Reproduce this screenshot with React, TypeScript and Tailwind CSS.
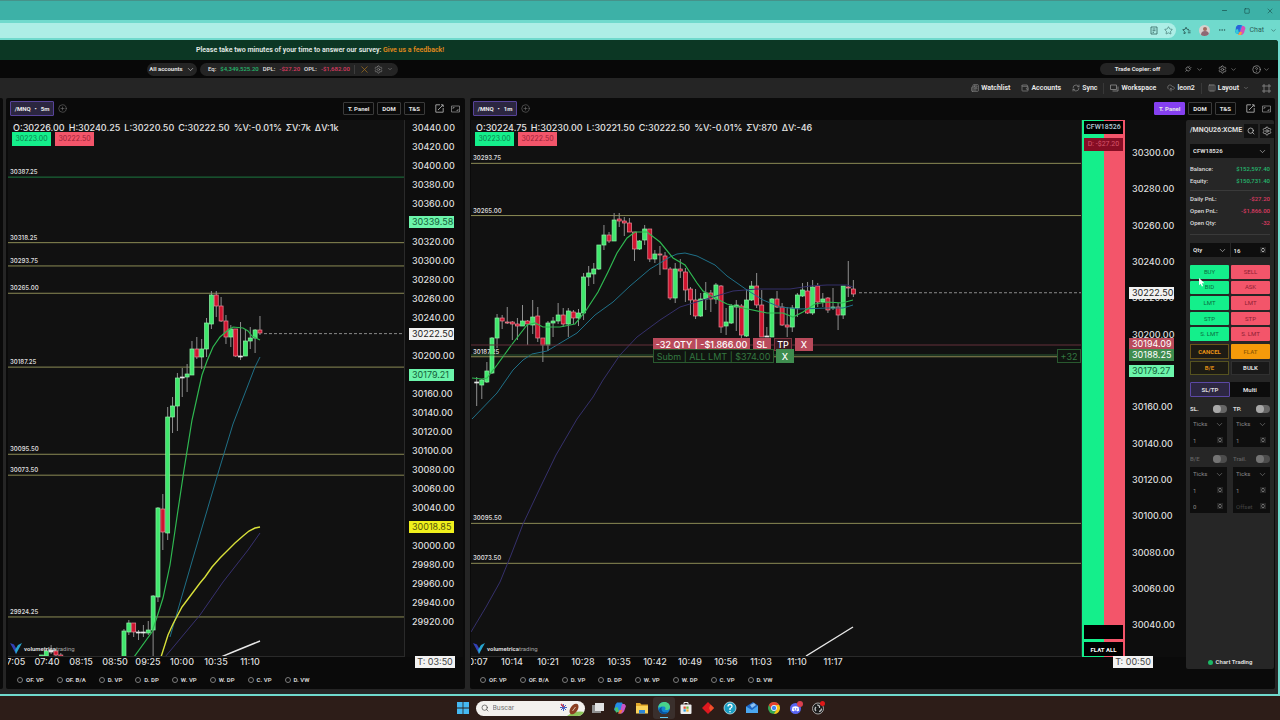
import type { ReactNode } from 'react';
import {
  ChevronDown,
  ChevronsUpDown,
  CirclePlus,
  CircleQuestionMark,
  CloudUpload,
  Columns3,
  Ellipsis,
  Minus,
  Newspaper,
  Plug,
  RefreshCw,
  Search,
  Settings,
  Square,
  Star,
  Wallet,
  X,
} from 'lucide-react';

// slot, body top, body bottom, high, low, direction (u = up, d = down, n = doji)
type Candle = [number, number, number, number, number, 'u' | 'd' | 'n'];

const candles5m: Candle[] = [
  [0, 535, 537, 535, 537, 'u'], [1, 531, 536, 528, 537, 'u'], [2, 530, 532, 525, 534, 'n'],
  [3, 531, 535, 529, 537, 'd'], [4, 535, 537, 533, 537, 'd'], [17, 511, 537, 509, 537, 'u'],
  [18, 503, 512, 500, 515, 'u'], [19, 503, 512, 503, 517, 'd'], [20, 512, 513, 510, 520, 'n'],
  [21, 512, 513, 505, 517, 'n'], [22, 510, 513, 501, 515, 'u'], [23, 476, 510, 475, 537, 'u'],
  [24, 388, 477, 387, 482, 'u'], [25, 389, 412, 374, 430, 'd'], [26, 297, 413, 287, 420, 'u'],
  [27, 286, 297, 277, 313, 'u'], [28, 258, 286, 253, 311, 'u'], [29, 257, 258, 248, 277, 'n'],
  [30, 254, 257, 244, 272, 'u'], [31, 229, 255, 221, 255, 'u'], [32, 229, 237, 217, 239, 'd'],
  [33, 229, 237, 219, 249, 'u'], [34, 203, 229, 198, 237, 'u'], [35, 175, 204, 171, 209, 'u'],
  [36, 175, 186, 171, 197, 'd'], [37, 186, 201, 177, 202, 'd'], [38, 201, 217, 195, 224, 'd'],
  [39, 209, 217, 205, 227, 'u'], [40, 209, 236, 209, 237, 'd'], [41, 236, 237, 202, 240, 'n'],
  [42, 221, 236, 209, 236, 'u'], [43, 218, 221, 207, 229, 'u'], [44, 210, 218, 209, 233, 'u'],
  [45, 210, 213, 196, 215, 'd'],
];

const candles1m: Candle[] = [
  [0, 262, 263, 257, 286, 'n'], [1, 260, 265, 259, 279, 'u'], [2, 251, 262, 242, 263, 'u'],
  [3, 218, 253, 217, 254, 'u'], [4, 198, 218, 194, 228, 'u'], [5, 198, 201, 195, 209, 'd'],
  [6, 202, 203, 187, 204, 'd'], [7, 202, 204, 201, 220, 'd'], [8, 204, 206, 198, 220, 'd'],
  [9, 201, 206, 185, 206, 'u'], [10, 201, 204, 200, 225, 'd'], [11, 197, 205, 180, 214, 'u'],
  [12, 196, 218, 187, 222, 'd'], [13, 218, 225, 218, 242, 'd'], [14, 203, 225, 201, 231, 'u'],
  [15, 201, 203, 197, 217, 'u'], [16, 195, 201, 183, 204, 'u'], [17, 195, 204, 188, 207, 'd'],
  [18, 191, 204, 188, 217, 'u'], [19, 192, 198, 190, 204, 'd'], [20, 193, 198, 189, 206, 'u'],
  [21, 157, 193, 153, 200, 'u'], [22, 153, 157, 146, 166, 'u'], [23, 149, 154, 143, 164, 'u'],
  [24, 125, 149, 125, 150, 'u'], [25, 115, 125, 105, 130, 'u'], [26, 115, 121, 112, 123, 'd'],
  [27, 100, 121, 93, 121, 'u'], [28, 99, 101, 93, 107, 'd'], [29, 101, 103, 97, 116, 'd'],
  [30, 103, 112, 98, 112, 'd'], [31, 112, 129, 112, 141, 'd'], [32, 121, 129, 120, 130, 'u'],
  [33, 109, 120, 105, 125, 'u'], [34, 109, 139, 109, 142, 'd'], [35, 134, 139, 130, 143, 'u'],
  [36, 134, 135, 126, 155, 'd'], [37, 136, 149, 132, 149, 'd'], [38, 149, 178, 147, 180, 'd'],
  [39, 149, 178, 143, 183, 'u'], [40, 149, 151, 139, 158, 'd'], [41, 152, 170, 148, 182, 'd'],
  [42, 169, 180, 167, 195, 'd'], [43, 180, 196, 169, 199, 'd'], [44, 179, 196, 173, 197, 'u'],
  [45, 173, 179, 162, 190, 'u'], [46, 173, 179, 170, 192, 'd'], [47, 165, 179, 163, 184, 'u'],
  [48, 166, 207, 165, 213, 'd'], [49, 202, 206, 188, 215, 'u'], [50, 186, 203, 184, 204, 'u'],
  [51, 185, 187, 180, 211, 'u'], [52, 186, 215, 184, 218, 'd'], [53, 180, 216, 169, 217, 'u'],
  [54, 166, 180, 161, 181, 'u'], [55, 166, 185, 153, 188, 'd'], [56, 185, 217, 170, 217, 'd'],
  [57, 216, 217, 207, 217, 'n'], [58, 179, 217, 178, 217, 'u'], [59, 179, 187, 171, 188, 'd'],
  [60, 187, 205, 183, 206, 'd'], [61, 205, 207, 187, 217, 'd'], [62, 188, 207, 185, 212, 'u'],
  [63, 175, 188, 173, 197, 'u'], [64, 170, 176, 163, 177, 'u'], [65, 171, 193, 162, 194, 'd'],
  [66, 167, 193, 160, 195, 'u'], [67, 166, 182, 163, 187, 'd'], [68, 179, 182, 173, 187, 'u'],
  [69, 178, 190, 177, 193, 'd'], [70, 187, 188, 168, 190, 'u'], [71, 187, 195, 183, 210, 'd'],
  [72, 166, 195, 166, 199, 'u'], [73, 167, 168, 141, 177, 'd'], [74, 169, 174, 160, 177, 'd'],
];

const averages5m = [
  { color: '#1f6f86', width: 1, points: '162,517 169,493 185,438 211,350 225,304 237,273 247,247 252,237' },
  { color: '#37306f', width: 1, points: '157,537 192,495 215,462 240,430 252,413' },
  { color: '#d8e03a', width: 1.4, points: '153,537 160,515 165,504 174,487 183,475 192,463 197,457 204,447 212,438 219,431 227,423 235,416 241,411 247,408 252,407' },
  { color: '#2fb851', width: 1.2, points: '126,537 144,512 149,497 155,478 162,445 170,390 176,350 184,300 194,255 199,241 205,227 212,217 219,211 225,207 235,208 240,211 244,216 248,218 252,220' },
  { color: '#e8e8e8', width: 1.4, points: '213,537 225,532 252,521' },
];

const averages1m = [
  { color: '#35306b', width: 1, points: '0,512 15,487 29,462 40,435 52,404 69,368 85,335 106,299 122,277 132,260 149,235 166,217 189,200 209,187 232,180 262,171 286,169 319,169 339,166 356,165 376,165 382,167' },
  { color: '#1f7088', width: 1, points: '1,299 26,273 42,250 52,240 61,234 76,231 91,222 106,213 124,195 142,182 159,166 179,149 199,137 206,134 214,133 226,136 244,145 256,156 276,170 292,180 309,187 329,189 356,188 372,188 382,185' },
  { color: '#2fb851', width: 1.2, points: '1,258 11,259 16,258 26,245 39,227 56,205 64,203 72,207 89,207 104,204 114,192 127,172 137,152 146,133 156,118 164,112 176,112 189,122 202,138 214,145 226,163 232,171 242,177 256,184 272,188 296,193 312,193 322,197 332,192 344,184 356,182 371,183 382,180' },
  { color: '#e8e8e8', width: 1.4, points: '335,536 382,507' },
];

type ChartData = {
  candles: Candle[];
  averages: { color: string; width: number; points: string }[];
  firstX: number;
  step: number;
  lastX: number;
  y: (price: number) => number;
  levels: { price: number; color?: string }[];
  times: [number, string][];
};

const y5m = (price: number) => 7 + (30440 - price) * 0.95;
const y1m = (price: number) => 32 + (30300 - price) * 1.816;

const chart5m: ChartData = {
  candles: candles5m,
  averages: averages5m,
  firstX: 33.4,
  step: 4.857,
  lastX: 256,
  y: y5m,
  levels: [
    { price: 30387.25, color: '#1d7a40' },
    { price: 30318.25 },
    { price: 30293.75 },
    { price: 30265 },
    { price: 30187.25 },
    { price: 30095.5 },
    { price: 30073.5 },
    { price: 29924.25 },
  ],
  times: [[5, '07:05'], [39, '07:40'], [73, '08:15'], [107, '08:50'], [140, '09:25'], [174, '10:00'], [208, '10:35'], [242, '11:10']],
};

const chart1m: ChartData = {
  candles: candles1m,
  averages: averages1m,
  firstX: 5.7,
  step: 5.09,
  lastX: 388,
  y: y1m,
  levels: [
    { price: 30318.25 },
    { price: 30293.75 },
    { price: 30265 },
    { price: 30187.25 },
    { price: 30095.5 },
    { price: 30073.5 },
  ],
  times: [
    [5, '10:07'], [41, '10:14'], [77, '10:21'], [112, '10:28'], [148, '10:35'], [184, '10:42'],
    [219, '10:49'], [255, '10:56'], [290, '11:03'], [326, '11:10'], [362, '11:17'],
  ],
};

function Plot({ data, children }: { data: ChartData; children?: ReactNode }) {
  return (
    <div className="relative min-h-[537px] min-w-0 flex-1 overflow-hidden border-b border-r border-[#2a2a2a] bg-[#111111] font-['Inter',sans-serif]">
      <svg className="absolute inset-0 h-full w-full">
        {data.levels.map(({ price, color }) => (
          <g key={price}>
            <line x1="0" x2="100%" y1={data.y(price)} y2={data.y(price)} stroke={color ?? '#8c8b55'} />
            <text x="2" y={data.y(price) - 3} fill="#d6d6d6" fontSize="6" fontWeight="600">
              {data.y(price) > 8 && price.toFixed(2)}
            </text>
          </g>
        ))}
        {data.candles.map(([slot, top, bottom, high, low, dir]) => {
          const x = data.firstX + slot * data.step;
          return (
            <g key={slot}>
              <line x1={x} x2={x} y1={high} y2={low} stroke="#8f8f8f" />
              <rect
                x={x - 2}
                y={top}
                width="4"
                height={bottom - top}
                fill={dir === 'u' ? '#3fe86c' : dir === 'd' ? '#d0142f' : '#e5e5e5'}
                stroke={dir === 'u' ? '#8df2a6' : dir === 'd' ? '#e98b98' : '#e5e5e5'}
                strokeWidth="0.7"
              />
            </g>
          );
        })}
        {data.averages.map((line) => (
          <polyline key={line.points} points={line.points} fill="none" stroke={line.color} strokeWidth={line.width} />
        ))}
        <line
          x1={data.lastX}
          x2="100%"
          y1={data.y(30222.5)}
          y2={data.y(30222.5)}
          stroke="#8a8a8a"
          strokeDasharray="3 2"
        />
      </svg>
      {children}
      <div className="absolute bottom-[2px] left-[2px] flex items-center gap-[2px] font-['Roboto',sans-serif] text-[6px] leading-none text-[#a5a5a5]">
        <svg viewBox="0 0 12 11" className="h-[11px] w-[12px]">
          <path d="M0 0 L4 1.5 L6.5 6 L6 11 Z" fill="#3340b5" />
          <path d="M12 0 L8 2 L5 7 L6 11 Z" fill="#27a5cf" />
        </svg>
        <span>
          <b className="font-bold text-[#d8d8d8]">volumetrica</b>trading
        </span>
      </div>
    </div>
  );
}

function TimeAxis({ times }: { times: [number, string][] }) {
  return (
    <svg className="mt-[-3px] block h-[16px] w-full shrink-0 font-['Inter',sans-serif]">
      {times.map(([x, label]) => (
        <text key={label} x={x} y="11" fill="#dedede" fontSize="9" fontWeight="500" textAnchor="middle">
          {label}
        </text>
      ))}
    </svg>
  );
}

type Tag = { price: number; bg: string; fg: string };
type PriceAxisProps = { y: (price: number) => number; from: number; to: number; tags: Tag[]; className: string };

function PriceAxis({ y, from, to, tags, className }: PriceAxisProps) {
  const prices: number[] = [];
  for (let p = from; p >= to; p -= 20) {
    // a tag that sits right on a grid price replaces it
    if (!tags.some((tag) => Math.abs(y(tag.price) - y(p)) < 4)) prices.push(p);
  }
  return (
    <svg className={`shrink-0 bg-[#0d0d0d] font-['Inter',sans-serif] ${className}`}>
      {prices.map((p) => (
        <text key={p} x="7" y={y(p) + 4} fill="#dedede" fontSize="9" fontWeight="500">
          {p.toFixed(2)}
        </text>
      ))}
      {tags.map((tag) => (
        <g key={tag.price}>
          <rect x="4" y={Math.round(y(tag.price) - 6)} width="45" height="12" fill={tag.bg} />
          <text x="7" y={y(tag.price) + 3} fill={tag.fg} fontSize="9">
            {tag.price.toFixed(2)}
          </text>
        </g>
      ))}
    </svg>
  );
}

function Legend({ values }: { values: [string, string][] }) {
  return (
    <div className="absolute left-[4px] top-[3px]">
      <div className="flex gap-[4px] pl-px text-[9px] font-medium leading-[9px] text-[#e4e4e4]">
        {values.map(([name, value]) => (
          <span key={name}>
            {name}:{value}
          </span>
        ))}
      </div>
      <div className="flex gap-[4px] text-[7px] leading-[14px]">
        <span className="w-[39px] bg-[#14ef8b] text-center text-[#0d7d4b]">30223.00</span>
        <span className="w-[39px] bg-[#f3556a] text-center text-[#9a2438]">30222.50</span>
      </div>
    </div>
  );
}

function PanelHeader({ frame, active }: { frame: string; active?: boolean }) {
  const box = 'h-[13px] rounded-[1px] border px-[4px] text-[6px] font-bold leading-none';
  return (
    <div className="flex h-[22px] shrink-0 items-center justify-between pb-px pl-[2px] pr-[3px]">
      <div className="flex items-center gap-[4px]">
        <button className="flex h-[15px] w-[44px] items-center justify-center gap-[4px] rounded-[1px] border border-[#574399] bg-[#2b2640] text-[6px] font-bold text-[#ececec]">
          <span>/MNQ</span>
          <span>•</span>
          <span>{frame}</span>
        </button>
        <button aria-label="Add chart">
          <CirclePlus className="size-[9px] text-[#777]" strokeWidth={1.5} />
        </button>
      </div>
      <div className="flex items-center gap-[3px] text-[#e4e4e4]">
        <button className={active ? `${box} border-[#8540f0] bg-[#8540f0]` : `${box} border-[#3a3a3a]`}>T. Panel</button>
        <button className={`${box} border-[#3a3a3a]`}>DOM</button>
        <button className={`${box} border-[#3a3a3a]`}>T&amp;S</button>
        <button aria-label="Detach" className="ml-[7px]">
          <svg viewBox="0 0 9 9" className="size-[9px]" fill="none" stroke="#aaa" strokeWidth=".9">
            <path d="M5 .8H.8v7.400h7.400V4 M3 6l5-5 M6 .8h2.200V3" />
          </svg>
        </button>
        <button aria-label="Maximize" className="ml-[4px]">
          <svg viewBox="0 0 9 8" className="h-[8px] w-[9px]" fill="none" stroke="#8a8a8a">
            <path d="M.5 1h8v6h-8z M2 4V2.5h1.500 M7 4v1.500H5.500" strokeWidth=".8" />
          </svg>
        </button>
      </div>
    </div>
  );
}

function StudyBar({ group }: { group: string }) {
  const studies = ['OF. VP', 'OF. B/A', 'D. VP', 'D. DP', 'W. VP', 'W. DP', 'C. VP', 'D. VW'];
  return (
    <div className="flex h-[19px] shrink-0 items-center gap-[13px] pl-[9px]">
      {studies.map((name) => (
        <label key={name} className="flex items-center gap-[3px] text-[6px] font-bold leading-none text-[#cfcfcf]">
          <input type="radio" name={group} className="size-[6px] appearance-none rounded-full border border-[#7c7c7c]" />
          {name}
        </label>
      ))}
    </div>
  );
}

function Select({ label, value, className = '' }: { label: string; value: string; className?: string }) {
  return (
    <span className={`relative flex h-[14px] min-w-0 items-center bg-[#0e0e0e] ${className}`}>
      <select aria-label={label} className="h-full w-full appearance-none rounded-none bg-transparent px-[3px] text-[6px] leading-none">
        <option>{value}</option>
      </select>
      <ChevronDown className="pointer-events-none absolute right-[3px] size-[9px]" strokeWidth={1.5} />
    </span>
  );
}

function NumberBox({ label, value, placeholder }: { label: string; value?: string; placeholder?: string }) {
  return (
    <span className="flex h-[14px] min-w-0 items-center bg-[#0e0e0e] pr-[4px]">
      <input
        aria-label={label}
        defaultValue={value}
        placeholder={placeholder}
        className="h-full w-full min-w-0 bg-transparent px-[3px] text-[6px] leading-none placeholder:text-[#444]"
      />
      <span className="bg-[#262626]">
        <ChevronsUpDown className="size-[6px]" strokeWidth={3} />
      </span>
    </span>
  );
}

function Toggle({ label, dim }: { label: string; dim?: boolean }) {
  return (
    <label
      className={
        dim
          ? 'flex items-center justify-between text-[6px] font-medium text-[#8d8d8d] opacity-60'
          : 'flex items-center justify-between text-[6px] font-bold text-[#dcdcdc]'
      }
    >
      {label}
      <input
        type="checkbox"
        className="h-[8px] w-[14px] appearance-none rounded-full bg-[#666] before:block before:size-[8px] before:rounded-full before:bg-[#a8a8a8]"
      />
    </label>
  );
}

function Row({ name, value, tone }: { name: string; value: string; tone: string }) {
  return (
    <div className="flex h-[12px] items-center justify-between">
      <dt>{name}</dt>
      <dd className={tone}>{value}</dd>
    </div>
  );
}

function OrderPanel() {
  const orders = ['BUY', 'SELL', 'BID', 'ASK', 'LMT', 'LMT', 'STP', 'STP', 'S. LMT', 'S. LMT'];
  return (
    <aside className="mb-[-12px] flex w-[88px] shrink-0 flex-col rounded-[2px] bg-[#262626] px-[4px] text-[6px] leading-none text-[#dcdcdc]">
      <div className="mr-[-2px] flex h-[21px] items-center gap-[2px]">
        <h2 className="flex-1 text-[7px] font-bold">/MNQU26:XCME</h2>
        <button aria-label="Search symbol" className="bg-[#111] p-[3px]">
          <Search className="size-[8px]" />
        </button>
        <button aria-label="Panel settings" className="bg-[#111] p-[2px]">
          <Settings className="size-[10px]" strokeWidth={1.5} />
        </button>
      </div>
      <Select label="Account" value="CFW18526" className="mt-[3px] font-bold" />
      <dl className="mt-[5px] border-b border-[#3a3a3a] pb-[3px] font-medium">
        <Row name="Balance:" value="$152,597.40" tone="text-[#25b86e]" />
        <Row name="Equity:" value="$150,731.40" tone="text-[#25b86e]" />
      </dl>
      <dl className="mt-[2px] border-b border-[#3a3a3a] pb-[5px] font-medium">
        <Row name="Daily PnL:" value="-$27.20" tone="text-[#dd3b62]" />
        <Row name="Open PnL:" value="-$1,866.00" tone="text-[#dd3b62]" />
        <Row name="Open Qty:" value="-32" tone="text-[#dd3b62]" />
      </dl>
      <div className="mt-[8px] grid grid-cols-2 gap-px font-bold">
        <Select label="Quantity type" value="Qty" />
        <NumberBox label="Quantity" value="16" />
      </div>
      <div className="relative mt-[8px] grid h-[76px] grid-cols-2 grid-rows-5 gap-x-[2px] gap-y-[2px]">
        {orders.map((name, i) => (
          <button
            key={i}
            className={i % 2 === 0 ? 'rounded-[1px] bg-[#14ef8b] text-[#0d6b40]' : 'rounded-[1px] bg-[#f3556a] text-[#8d2033]'}
          >
            {name}
          </button>
        ))}
        {/* mouse pointer */}
        <svg viewBox="0 0 8 11" className="absolute left-[8px] top-[13px] h-[9px] w-[7px]">
          <path d="M1 0v9l2-2 1.500 3.500 1.500-.7L4.500 6.500H7.500z" fill="#fff" />
        </svg>
      </div>
      <div className="mt-[3px] grid grid-cols-2 gap-x-[2px] gap-y-[2px] font-bold">
        <button className="h-[15px] border border-[#6b5418] bg-[#1e1b14] text-[#e69414]">CANCEL</button>
        <button className="h-[15px] rounded-[1px] bg-[#f59a0a] font-medium text-[#8f5a05]">FLAT</button>
        <button className="h-[14px] border border-[#55521f] bg-[#1c1b14] text-[#d98a14]">B/E</button>
        <button className="h-[14px] border border-[#303030] bg-[#191919]">BULK</button>
      </div>
      <div className="mt-[7px] grid grid-cols-2 font-bold">
        <button className="h-[15px] rounded-[1px] border border-[#5c48a5] bg-[#2d2742]">SL/TP</button>
        <button className="h-[15px] bg-[#0c0c0c]">Multi</button>
      </div>
      <div className="mt-[8px] grid grid-cols-2 gap-x-[6px]">
        <Toggle label="SL." />
        <Toggle label="TP." />
      </div>
      <div className="mt-[4px] grid grid-cols-2 gap-x-[6px] text-[#8a8a8a]">
        {['Stop', 'Target'].map((name) => (
          <div key={name} className="flex h-[30px] flex-col justify-between bg-[#0e0e0e]">
            <Select label={`${name} unit`} value="Ticks" />
            <NumberBox label={`${name} distance`} value="1" />
          </div>
        ))}
      </div>
      <div className="mt-[8px] grid grid-cols-2 gap-x-[6px]">
        <Toggle label="B/E" dim />
        <Toggle label="Trail." dim />
      </div>
      <div className="mt-[4px] grid grid-cols-2 gap-x-[6px] text-[#8a8a8a]">
        {['Break even', 'Trailing'].map((name, i) => (
          <div key={name} className="flex h-[46px] flex-col justify-between bg-[#0e0e0e]">
            <Select label={`${name} unit`} value="Ticks" />
            <NumberBox label={`${name} distance`} value="1" />
            <NumberBox label={`${name} offset`} value={i === 0 ? '0' : undefined} placeholder="Offset" />
          </div>
        ))}
      </div>
      <div className="mt-auto flex h-[14px] items-center justify-center gap-[3px] font-bold">
        <span className="size-[5px] rounded-full bg-[#1bb866]" />
        Chart Trading
      </div>
    </aside>
  );
}

function PositionLines() {
  return (
    <div className="absolute inset-0 text-[9px] leading-none">
      <svg className="absolute inset-0 h-full w-full">
        <line x1="0" x2="100%" y1="225" y2="225" stroke="#64303a" />
        <line x1="0" x2="100%" y1="235" y2="235" stroke="#2c5a32" />
      </svg>
      <div className="absolute left-[182px] top-[218px] flex gap-[3px] font-medium text-white">
        <span className="h-[13px] w-[97px] bg-[#b94a5b] pt-[2px] text-center">-32 QTY | -$1.866.00</span>
        <button className="h-[13px] w-[18px] bg-[#b94a5b]">SL</button>
        <button className="h-[13px] w-[18px] border border-[#7d3340] bg-[#3b1920]">TP</button>
        <button className="h-[13px] w-[18px] bg-[#b94a5b]">X</button>
      </div>
      <div className="absolute left-[182px] top-[229px] flex gap-[2px]">
        <span className="h-[14px] w-[121px] border border-[#29592f] bg-[#101410] pt-[2px] text-center text-[#347840]">
          Subm | ALL LMT | $374.00
        </span>
        <button className="h-[14px] w-[18px] bg-[#3f8d4f] font-medium text-white">X</button>
      </div>
      <span className="absolute right-0 top-[229px] h-[14px] w-[24px] border border-[#29592f] bg-[#101410] pt-[2px] text-center text-[#347840]">
        +32
      </span>
    </div>
  );
}

function DepthColumn() {
  return (
    <div className="flex w-[43px] shrink-0 flex-col justify-between bg-linear-to-r from-[#14ef8b] from-50% to-[#f3556a] to-50% px-[2px] py-px text-center text-[7px] leading-[13px]">
      <div className="space-y-[4px]">
        <div className="bg-black font-medium text-[#b9cdd8]">CFW18526</div>
        <div className="bg-[#860d24] text-[#d8566c]">D: -$27.20</div>
      </div>
      <div className="space-y-[3px]">
        <div className="h-[14px] bg-black" />
        <button className="block h-[14px] w-full bg-black text-[6px] font-bold text-white">FLAT ALL</button>
      </div>
    </div>
  );
}

function BrowserBar() {
  return (
    <header>
      <div className="flex h-[20px] items-center justify-end gap-[16px] border-t border-[#46928a] bg-[#3db1a7] pr-[6px] text-[#123c39]">
        <button aria-label="Minimize"><Minus className="size-[7px]" /></button>
        <button aria-label="Maximize window"><Square className="size-[6px]" /></button>
        <button aria-label="Close"><X className="size-[8px]" strokeWidth={1.5} /></button>
      </div>
      <div className="flex h-[20px] items-center bg-[#70dacd] pr-[3px] text-[#2d5f5a]">
        <div className="flex h-[15px] flex-1 items-center justify-end gap-[6px] rounded-r-full bg-[#adeee6] pr-[3px]">
          <svg viewBox="0 0 8 9" className="h-[9px] w-[8px]" fill="none" stroke="currentColor" strokeWidth=".8">
            <path d="M1 1h6v7H1z M2.500 3h3 M2.500 4.700h3 M2.500 6.300h1.500" />
          </svg>
          <Star className="size-[9px]" strokeWidth={1.5} />
        </div>
        <div className="flex items-center gap-[8px] pl-[6px]">
          <svg viewBox="0 0 10 9" className="h-[9px] w-[9px]" fill="none" stroke="currentColor">
            <path d="M4.500 .8l1 2.300 2.300.3 M4.500.8l-1.100 2.400-2.600.4 1.900 1.800-.5 2.700 2.300-1.300 M6.500 5h3 M6.500 7h3" />
          </svg>
          <span className="flex size-[11px] flex-col items-center overflow-hidden rounded-full bg-[#d5d0cd] pt-[2px]">
            <span className="size-[4px] rounded-full bg-[#a06b5f]" />
            <span className="h-[5px] w-[8px] rounded-t-full bg-[#8d6a74]" />
          </span>
          <Ellipsis className="size-[8px]" />
          <button className="flex items-center gap-[3px] text-[7px] leading-none">
            <Copilot />
            Chat
            <ChevronDown className="ml-[3px] size-[7px]" />
          </button>
        </div>
      </div>
    </header>
  );
}

function Copilot() {
  return (
    <svg viewBox="0 0 12 12" className="size-[12px]">
      <path d="M4 1h4l1 2-3 7H3L1 8l1-5z" fill="#1f8fe8" />
      <path d="M2 3l2-2h3L5 8H2z" fill="#2a62d8" />
      <path d="M1 6l3-1 1 4-2 1H2z" fill="#35c9d8" />
      <path d="M8 2h2l1.500 2-1.500 5-2 2H4l1.500-2z" fill="#d452b8" />
      <path d="M4 11l1.500-3L8 8l-1 3z" fill="#f5a03a" />
    </svg>
  );
}

function TopNav() {
  return (
    <nav className="flex h-[18px] items-center bg-[#080808] pl-[147px] pr-[8px] text-[6px] font-bold leading-none text-[#e2e2e2]">
      <button className="flex h-[13px] w-[50px] items-center justify-center gap-[3px] rounded-full bg-[#242424]">
        All accounts
        <ChevronDown className="size-[9px]" strokeWidth={1.5} />
      </button>
      <div className="ml-[3px] flex h-[13px] w-[198px] items-center gap-[4px] rounded-full bg-[#242424] pl-[8px] font-medium">
        <span>Eq:</span>
        <span className="text-[#25b86e]">$4,349,525.20</span>
        <span>DPL:</span>
        <span className="text-[#dd3b62]">-$27.20</span>
        <span>OPL:</span>
        <span className="text-[#dd3b62]">-$1,682.00</span>
        <span className="h-[9px] w-px shrink-0 bg-[#3d3d3d]" />
        <X className="size-[11px] shrink-0 text-[#a8731f]" strokeWidth={1.5} />
        <Settings className="size-[9px] shrink-0 text-[#999]" strokeWidth={1.5} />
        <ChevronDown className="size-[6px] shrink-0 text-[#999]" />
      </div>
      <div className="ml-auto flex items-center gap-[15px] text-[#9a9a9a]">
        <button className="mr-[-6px] h-[12px] w-[75px] rounded-full bg-[#242424] text-[#e2e2e2]">Trade Copier: off</button>
        <button aria-label="Connections" className="flex items-center gap-[4px]">
          <Plug className="size-[8px] rotate-45" /><ChevronDown className="size-[7px]" />
        </button>
        <button aria-label="Settings" className="flex items-center gap-[3px]">
          <Settings className="size-[9px]" /><ChevronDown className="size-[7px]" />
        </button>
        <button aria-label="Help" className="flex items-center gap-[2px]">
          <CircleQuestionMark className="size-[9px]" /><ChevronDown className="size-[7px]" />
        </button>
      </div>
    </nav>
  );
}

function Toolbar() {
  const item = 'flex items-center gap-[2px]';
  const icon = 'size-[8px] text-[#8e8e8e]';
  return (
    <div className="flex h-[20px] items-center justify-end gap-[11px] pr-[7px] text-[7px] font-semibold leading-none text-[#ececec]">
      <button className={item}><Newspaper className={icon} />Watchlist</button>
      <button className={item}><Wallet className={icon} />Accounts</button>
      <button className={item}><RefreshCw className={icon} />Sync</button>
      <span className="mx-[-5px] h-[11px] w-px bg-[#383838]" />
      <button className={item}>
        <svg viewBox="0 0 9 8" className="h-[8px] w-[9px]" fill="none" stroke="#8e8e8e" strokeWidth=".8">
          <path d="M.5 1h6v4.500h-6z M8 2.500v4.500H2.500" />
        </svg>
        Workspace
      </button>
      <button className={item}><CloudUpload className={icon} />leon2</button>
      <span className="mx-[-5px] h-[11px] w-px bg-[#383838]" />
      <button className={item}><Columns3 className={icon} />Layout<ChevronDown className="ml-[2px] size-[6px] text-[#999]" /></button>
      <button aria-label="Fullscreen" className="ml-[2px]">
        <svg viewBox="0 0 9 9" className="size-[9px]" fill="none" stroke="#8e8e8e" strokeWidth=".8">
          <path d="M2 2h5v5H2z M2 0v2H0 M7 0v2h2 M0 7h2v2 M9 7H7v2" />
        </svg>
      </button>
    </div>
  );
}

function TaskIcon({ label, active, children }: { label: string; active?: boolean; children: ReactNode }) {
  return (
    <button aria-label={label} className={active ? 'relative flex size-[22px] items-center justify-center rounded-[3px] bg-[#3a2f2c]' : 'relative flex size-[22px] items-center justify-center'}>
      <svg viewBox="0 0 14 14" className="size-[14px]">{children}</svg>
      {active && <span className="absolute bottom-[1px] h-px w-[8px] bg-[#62c8f0]" />}
    </button>
  );
}

function Taskbar() {
  return (
    <footer className="flex h-[24px] shrink-0 items-center justify-center bg-[#2d1d18]">
      <TaskIcon label="Start">
        <path d="M1 1h5.600v5.600H1zM7.400 1H13v5.600H7.400zM1 7.400h5.600V13H1zM7.400 7.400H13V13H7.400z" fill="#45b9f2" />
      </TaskIcon>
      <label className="mx-[2px] flex h-[15px] w-[109px] items-center gap-[4px] overflow-hidden rounded-full bg-[#f3f1ee] pl-[5px] text-[#444]">
        <Search className="size-[8px] shrink-0" />
        <input aria-label="Buscar" placeholder="Buscar" className="w-0 min-w-0 flex-1 bg-transparent text-[7px] leading-none placeholder:text-[#777]" />
        <svg viewBox="0 0 26 15" className="h-[15px] w-[26px] shrink-0">
          <path d="M8 15q8-6 18-4v4z" fill="#8dc45a" />
          <path d="M4.500 3v7M1 6.500h7M2 4l5 5M7 4l-5 5" stroke="#4562c4" strokeWidth="1" />
          <path d="M2 3l3 3" stroke="#d83b4a" strokeWidth="1.500" />
          <ellipse cx="15" cy="8" rx="3.600" ry="6" transform="rotate(35 15 8)" fill="#8b3f22" />
          <path d="M13.500 10l3-4" stroke="#f0d9c8" strokeWidth=".8" />
        </svg>
      </label>
      <TaskIcon label="Task view">
        <rect x="1" y="4" width="9" height="8" fill="#8f8f8f" />
        <rect x="4" y="2" width="9" height="8" fill="#e3e3e3" />
      </TaskIcon>
      <TaskIcon label="Copilot">
        <path d="M4 1.500h5l1 2-3 7.500H4L1 9l1.500-5.500z" fill="#248ce6" />
        <path d="M1.500 7l3-1 1.500 4-2 1.500H3z" fill="#4cc36d" />
        <path d="M9 3h2.500L13 5l-2 5.500-2 2H5.500l1.500-2z" fill="#c955c6" />
        <path d="M5 12.500L6.500 9h3L8 12.500z" fill="#f07a3c" />
      </TaskIcon>
      <TaskIcon label="File explorer">
        <path d="M1 2h4l1.500 1.500H13V12H1z" fill="#e3a82b" />
        <path d="M1 5h12v7.500H1z" fill="#fbd35a" />
        <path d="M4 9h6v3.500H4z" fill="#2d86d6" />
      </TaskIcon>
      <TaskIcon label="Edge" active>
        <circle cx="7" cy="7" r="6" fill="#1486d1" />
        <path d="M1.200 7C1.500 3 4.200 1 7.500 1c3.500 0 5.500 2.500 5.500 5 0 2-1.500 3-3 3H8c1-1 .8-3.500-1.500-3.500C4 5.500 2 6 1.200 7z" fill="#48d18a" />
        <path d="M4.500 7.500C4.500 11 7 12 11 11c-2.500 3-7 2.400-8.500-.5-1-2 .5-4 3-4.500-.6.400-1 .8-1 1.500z" fill="#0a4f9c" />
      </TaskIcon>
      <TaskIcon label="Store">
        <path d="M5 3.500V1.500h4v2" fill="none" stroke="#eee" />
        <rect x="1.500" y="3.500" width="11" height="9.500" rx="1" fill="#eeeeee" />
        <path d="M4.500 5.500H6.800v2.300H4.500z" fill="#e74b32" /><path d="M7.300 5.500h2.300v2.300H7.300z" fill="#6fb740" />
        <path d="M4.500 8.300h2.300v2.300H4.500z" fill="#2f9fe0" /><path d="M7.300 8.300h2.300v2.300H7.300z" fill="#f4b52c" />
      </TaskIcon>
      <TaskIcon label="AnyDesk">
        <path d="M7 1l6 6-6 6-6-6z" fill="#e0181f" />
        <path d="M9.500 3.500L13 7l-3.500 3.500L8 7z" fill="#f0502a" />
      </TaskIcon>
      <TaskIcon label="Help">
        <circle cx="7" cy="7" r="6" fill="#1b9fc4" stroke="#d8eef5" strokeWidth=".7" />
        <path d="M5 5.500Q5 3.500 7 3.500T9 5.500Q9 6.500 7 7.500V9M7 10v1.200" fill="none" stroke="#fff" strokeWidth="1.300" />
      </TaskIcon>
      <TaskIcon label="Mail">
        <path d="M1 5.500L8 1l5 3.500V12H1z" fill="#1d66c4" />
        <path d="M1 5.500L7 9l6-4.500V12H1z" fill="#4ba7f0" />
        <path d="M5 4l4-2 2 2-4 3z" fill="#8cc2f2" />
      </TaskIcon>
      <TaskIcon label="Chrome">
        <circle cx="7" cy="7" r="6" fill="#36a852" />
        <path d="M1.800 4A6 6 0 0 1 12.200 4H7L4.500 8.500z" fill="#e5402f" />
        <path d="M12.200 4A6 6 0 0 1 7 13l2.600-4.500L8.500 4z" fill="#fbc116" />
        <circle cx="7" cy="7" r="2.700" fill="#4285f4" stroke="#fff" strokeWidth=".8" />
      </TaskIcon>
      <TaskIcon label="Discord">
        <circle cx="6.500" cy="7.500" r="5.500" fill="#5865f2" />
        <path d="M3.500 6Q6.500 4.500 9.500 6l.7 3.500-1.800 1-.6-.9H5.200l-.6.9-1.800-1z" fill="#fff" />
        <circle cx="5.300" cy="8" r=".8" fill="#5865f2" /><circle cx="7.700" cy="8" r=".8" fill="#5865f2" />
        <circle cx="11" cy="3" r="3" fill="#d9404f" />
      </TaskIcon>
      <TaskIcon label="OBS">
        <circle cx="7" cy="7.500" r="5.500" fill="#1c1c1c" stroke="#c4c4c4" strokeWidth=".8" />
        <path d="M6 4q3 0 2.500 3M5 10Q3 8 5 6M8 10.500q2.500-.5 2.500-3" fill="none" stroke="#c4c4c4" strokeWidth="1.200" />
        <circle cx="11.500" cy="2.500" r="2.500" fill="#e01818" />
      </TaskIcon>
    </footer>
  );
}

export default function App() {
  return (
    <div className="flex min-h-screen flex-col font-['Roboto',sans-serif]">
      <BrowserBar />
      <div className="flex flex-1 flex-col bg-[#70dacd] pb-[2px] pr-[2px]">
        <div className="flex flex-1 flex-col overflow-hidden rounded-tr-[3px] bg-[#252525]">
          <p className="h-[20px] bg-[#0c3724] pl-[196px] text-[7px] font-semibold leading-[21px] text-[#e6ece8]">
            Please take two minutes of your time to answer our survey:{' '}
            <a href="#feedback" className="text-[#e08a1c]">Give us a feedback!</a>
          </p>
          <TopNav />
          <Toolbar />
          <main className="flex flex-1 pb-[5px] pr-[3px]">
            <div className="mr-[3px] w-[3px] rounded-r-[2px] bg-[#0a0a0a]" />
            <section className="mr-[5px] flex w-[36%] flex-col rounded-[2px] bg-[#0a0a0a] px-[2px]">
              <PanelHeader frame="5m" />
              <div className="relative flex flex-1">
                <Plot data={chart5m}>
                  <Legend
                    values={[
                      ['O', '30226.00'], ['H', '30240.25'], ['L', '30220.50'], ['C', '30222.50'],
                      ['%V', '-0.01%'], ['ΣV', '7k'], ['ΔV', '1k'],
                    ]}
                  />
                </Plot>
                <PriceAxis
                  className="w-[58px]"
                  y={y5m}
                  from={30440}
                  to={29920}
                  tags={[
                    { price: 30339.58, bg: '#6cf5ab', fg: '#14603a' },
                    { price: 30222.5, bg: '#f2f2f2', fg: '#222222' },
                    { price: 30179.21, bg: '#6cf5ab', fg: '#14603a' },
                    { price: 30018.85, bg: '#f0f01c', fg: '#55550c' },
                  ]}
                />
                <span className="absolute bottom-[-11px] right-[8px] w-[40px] bg-[#f2f2f2] text-center font-['Inter',sans-serif] text-[9px] leading-[12px] text-[#444]">
                  T: 03:50
                </span>
              </div>
              <TimeAxis times={chart5m.times} />
              <StudyBar group="studies-5m" />
            </section>
            <section className="flex min-w-0 flex-1 flex-col rounded-[2px] bg-[#0a0a0a] px-px">
              <PanelHeader frame="1m" active />
              <div className="relative flex flex-1">
                <Plot data={chart1m}>
                  <PositionLines />
                  <Legend
                    values={[
                      ['O', '30224.75'], ['H', '30230.00'], ['L', '30221.50'], ['C', '30222.50'],
                      ['%V', '-0.01%'], ['ΣV', '870'], ['ΔV', '-46'],
                    ]}
                  />
                </Plot>
                <DepthColumn />
                <PriceAxis
                  className="w-[61px]"
                  y={y1m}
                  from={30300}
                  to={30040}
                  tags={[
                    { price: 30222.5, bg: '#f2f2f2', fg: '#222222' },
                    { price: 30194.09, bg: '#b94a5b', fg: '#ffffff' },
                    { price: 30188.25, bg: '#3f8d4f', fg: '#ffffff' },
                    { price: 30179.27, bg: '#6cf5ab', fg: '#14603a' },
                  ]}
                />
                <span className="absolute bottom-[-11px] right-[121px] w-[40px] bg-[#f2f2f2] text-center font-['Inter',sans-serif] text-[9px] leading-[12px] text-[#444]">
                  T: 00:50
                </span>
                <OrderPanel />
              </div>
              <TimeAxis times={chart1m.times} />
              <StudyBar group="studies-1m" />
            </section>
          </main>
        </div>
      </div>
      <Taskbar />
    </div>
  );
}
